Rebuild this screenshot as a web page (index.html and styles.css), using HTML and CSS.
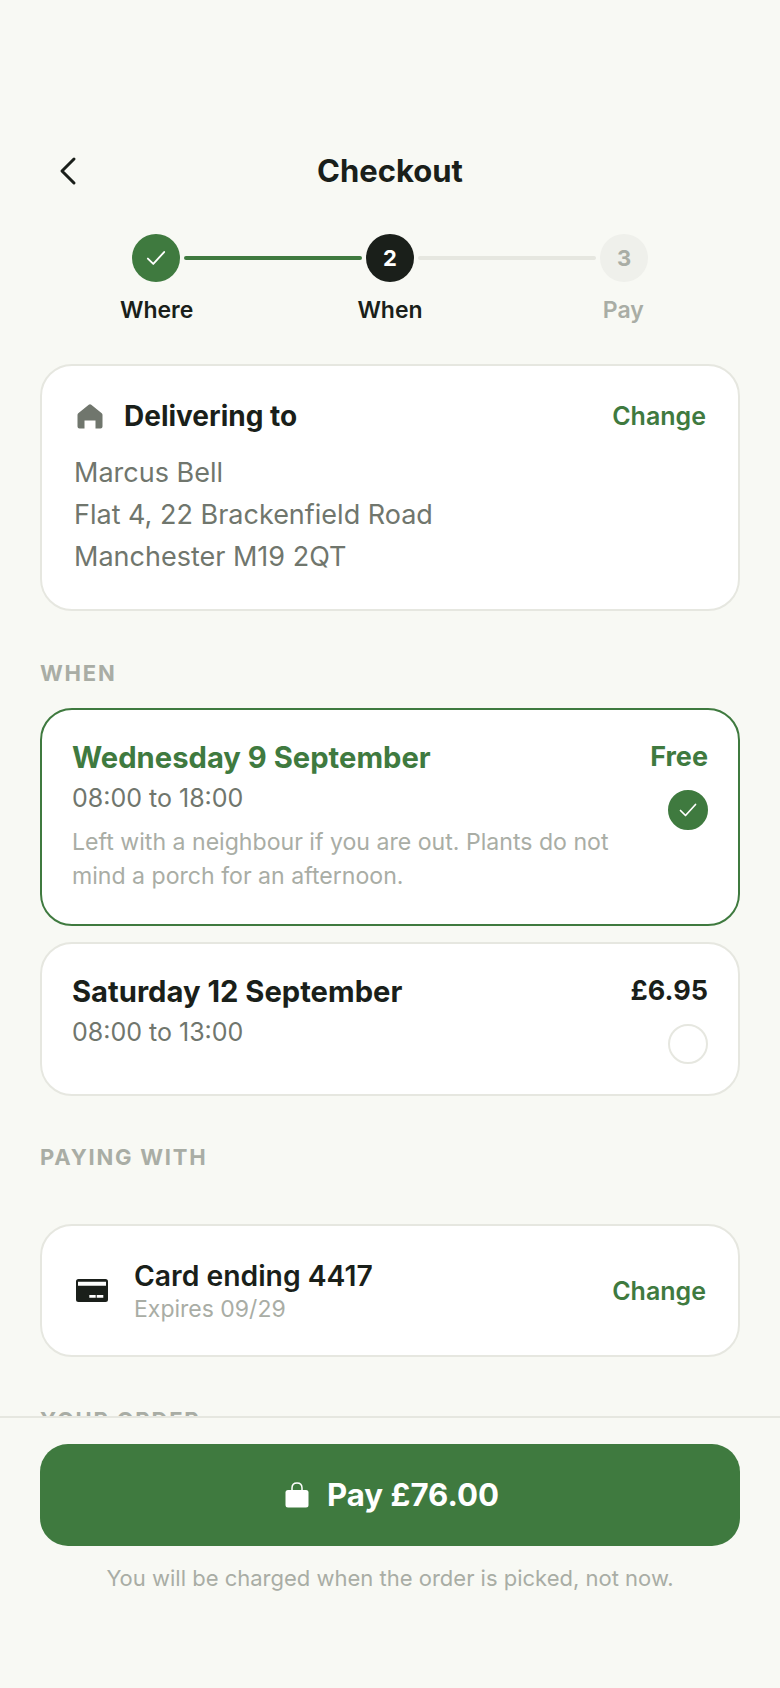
FILE: index.html
```html
<!DOCTYPE html>
<html lang="en">
<head>
<meta charset="utf-8">
<title>Checkout</title>
<link rel="stylesheet" href="styles.css">
</head>
<body>
<div class="screen">
  <main class="content">
    <header class="topbar">
      <button class="back" aria-label="Back">
        <svg width="40" height="40" viewBox="0 0 40 40" fill="none" stroke="#1a1f1a" stroke-width="3" stroke-linecap="round" stroke-linejoin="round"><path d="M26 8 L14 20 L26 32"/></svg>
      </button>
      <h1>Checkout</h1>
    </header>

    <div class="stepper">
      <div class="track">
        <span class="dot done">
          <svg width="26" height="26" viewBox="0 0 24 24" fill="none" stroke="#fff" stroke-width="1.7" stroke-linecap="round" stroke-linejoin="round"><path d="M4.5 12.5 L9.5 17.5 L19.5 6.5"/></svg>
        </span>
        <span class="line on"></span>
        <span class="dot current">2</span>
        <span class="line"></span>
        <span class="dot todo">3</span>
      </div>
      <div class="labels">
        <span>Where</span>
        <span>When</span>
        <span class="off">Pay</span>
      </div>
    </div>

    <section class="card address">
      <div class="card-head">
        <div class="head-left">
          <svg class="home" width="30" height="30" viewBox="0 0 24 24" fill="#70766d"><path d="M11 3 Q12 2.2 13 3 L21.4 9.8 Q22 10.3 22 11.2 V20.4 Q22 22 20.4 22 H16.4 V15.6 H7.6 V22 H3.6 Q2 22 2 20.4 V11.2 Q2 10.3 2.6 9.8 Z"/></svg>
          <h2>Delivering to</h2>
        </div>
        <a class="change">Change</a>
      </div>
      <p class="addr">Marcus Bell<br>Flat 4, 22 Brackenfield Road<br>Manchester M19 2QT</p>
    </section>

    <h3 class="section">WHEN</h3>
    <div class="options">
      <section class="card option selected">
        <div class="opt-main">
          <div class="opt-day">Wednesday 9 September</div>
          <div class="opt-time">08:00 to 18:00</div>
          <div class="opt-note">Left with a neighbour if you are out. Plants do not mind a porch for an afternoon.</div>
        </div>
        <div class="opt-side">
          <span class="price">Free</span>
          <span class="radio on">
            <svg width="24" height="24" viewBox="0 0 24 24" fill="none" stroke="#fff" stroke-width="1.7" stroke-linecap="round" stroke-linejoin="round"><path d="M4.5 12.5 L9.5 17.5 L19.5 6.5"/></svg>
          </span>
        </div>
      </section>
      <section class="card option">
        <div class="opt-main">
          <div class="opt-day">Saturday 12 September</div>
          <div class="opt-time">08:00 to 13:00</div>
        </div>
        <div class="opt-side">
          <span class="price">£6.95</span>
          <span class="radio"></span>
        </div>
      </section>
    </div>

    <h3 class="section paying">PAYING WITH</h3>
    <section class="card pay-card">
      <svg class="card-icon" width="32" height="23" viewBox="0 0 32 23"><path fill="#1a1f1a" fill-rule="evenodd" d="M2.5 0 H29.5 Q32 0 32 2.5 V20.5 Q32 23 29.5 23 H2.5 Q0 23 0 20.5 V2.5 Q0 0 2.5 0 Z M2 2.7 V6.7 H30 V2.7 Z M13.3 16 V18.7 H19.7 V16 Z M20.7 16 V18.7 H27.3 V16 Z"/></svg>
      <div class="pay-text">
        <div class="pay-title">Card ending 4417</div>
        <div class="pay-sub">Expires 09/29</div>
      </div>
      <a class="change">Change</a>
    </section>

    <h3 class="section order">YOUR ORDER</h3>
  </main>

  <footer class="paybar">
    <button class="paybtn">
      <svg width="24" height="26" viewBox="0 0 24 26"><path fill="none" stroke="#fff" stroke-width="1.5" d="M7 9 V6 Q7 1 12 1 Q17 1 17 6 V9"/><rect x="0.5" y="8" width="23" height="17.5" rx="2.5" fill="#fff"/></svg>
      <span>Pay £76.00</span>
    </button>
    <p class="hint">You will be charged when the order is picked, not now.</p>
  </footer>
</div>
</body>
</html>
```

FILE: styles.css
```css
* { box-sizing: border-box; }
html, body { margin: 0; padding: 0; }
body {
  font-family: Inter, "Liberation Sans", sans-serif;
  background: #f8f9f4;
  color: #1a1f1a;
}
.screen {
  position: relative;
  width: 780px;
  height: 1688px;
  overflow: hidden;
  background: #f8f9f4;
}
.content { padding: 144px 40px 0; }

.topbar {
  position: relative;
  display: flex;
  align-items: center;
  justify-content: center;
  height: 54px;
}
.topbar h1 { margin: 0; font-size: 31px; font-weight: 700; line-height: 54px; }
.back {
  position: absolute;
  left: 8px;
  top: 7px;
  width: 40px;
  height: 40px;
  padding: 0;
  border: 0;
  background: none;
}

.stepper { margin-top: 36px; }
.track {
  display: flex;
  align-items: center;
  gap: 4px;
  padding: 0 92px;
}
.dot {
  flex: none;
  display: flex;
  align-items: center;
  justify-content: center;
  width: 48px;
  height: 48px;
  border-radius: 50%;
  font-size: 22px;
  font-weight: 700;
}
.dot.done { background: #3f7a3f; }
.dot.current { background: #1a1f1a; color: #fff; }
.dot.todo { background: #eff0eb; color: #a9ada5; }
.line { flex: 1; height: 4px; border-radius: 2px; background: #e6e7e0; }
.line.on { background: #3f7a3f; }
.labels {
  display: grid;
  grid-template-columns: repeat(3, 1fr);
  margin-top: 13px;
  text-align: center;
  font-size: 23px;
  font-weight: 600;
  line-height: 30px;
}
.labels .off { color: #a9ada5; }

.card {
  background: #fff;
  border: 2px solid #e6e7e0;
  border-radius: 32px;
}
.address { margin-top: 39px; padding: 30px 32px 0; height: 247px; }
.card-head { display: flex; align-items: center; justify-content: space-between; }
.head-left { display: flex; align-items: center; gap: 19px; }
.home { display: block; margin-left: 1px; }
.card-head h2 { margin: 0; font-size: 28px; font-weight: 700; line-height: 40px; }
.change { font-size: 25px; font-weight: 600; color: #3f7a3f; }
.addr { margin: 16px 0 0; font-size: 27px; line-height: 42px; color: #70766d; }

.section {
  margin: 0;
  font-size: 22px;
  font-weight: 700;
  line-height: 28px;
  letter-spacing: 1.76px;
  color: #a9ada5;
}
.address + .section { margin-top: 48px; }
.options { margin-top: 21px; display: flex; flex-direction: column; gap: 16px; }
.option {
  display: flex;
  justify-content: space-between;
  padding: 30px;
}
.option.selected { border-color: #3f7a3f; height: 218px; }
.option:not(.selected) { height: 154px; }
.opt-main { width: 540px; }
.opt-day { margin-bottom: 4px; font-size: 29.2px; font-weight: 700; line-height: 36px; }
.selected .opt-day { color: #3f7a3f; }
.opt-time { font-size: 25px; line-height: 36px; color: #70766d; }
.opt-note { margin-top: 9px; font-size: 23.1px; line-height: 34px; color: #a9ada5; }
.opt-side { display: flex; flex-direction: column; align-items: flex-end; gap: 16px; }
.price { font-size: 27px; font-weight: 700; line-height: 34px; }
.selected .price { color: #3f7a3f; }
.radio {
  display: flex;
  align-items: center;
  justify-content: center;
  width: 40px;
  height: 40px;
  border-radius: 50%;
  border: 2px solid #e6e7e0;
}
.radio.on { background: #3f7a3f; border-color: #3f7a3f; }

.section.paying { margin-top: 47px; }
.pay-card {
  display: flex;
  align-items: center;
  margin-top: 53px;
  height: 133px;
  padding: 0 32px 0 34px;
}
.card-icon { display: block; flex: none; }
.pay-text { flex: 1; margin-left: 26px; }
.pay-title { font-size: 28.3px; font-weight: 600; line-height: 36px; }
.pay-sub { font-size: 23px; line-height: 30px; color: #a9ada5; }
.section.order { margin-top: 49px; }

.paybar {
  position: absolute;
  left: 0;
  right: 0;
  bottom: 0;
  height: 272px;
  padding: 26px 40px 0;
  background: #f8f9f4;
  border-top: 2px solid #e6e7e0;
}
.paybtn {
  display: flex;
  align-items: center;
  justify-content: center;
  gap: 18px;
  width: 100%;
  height: 102px;
  padding: 0 0 1px 4px;
  border: 0;
  border-radius: 28px;
  background: #3f7a3f;
  color: #fff;
  font-family: inherit;
  font-size: 31.2px;
  font-weight: 700;
}
.hint { margin: 16px 0 0; text-align: center; font-size: 22px; line-height: 32px; color: #a9ada5; }
```
